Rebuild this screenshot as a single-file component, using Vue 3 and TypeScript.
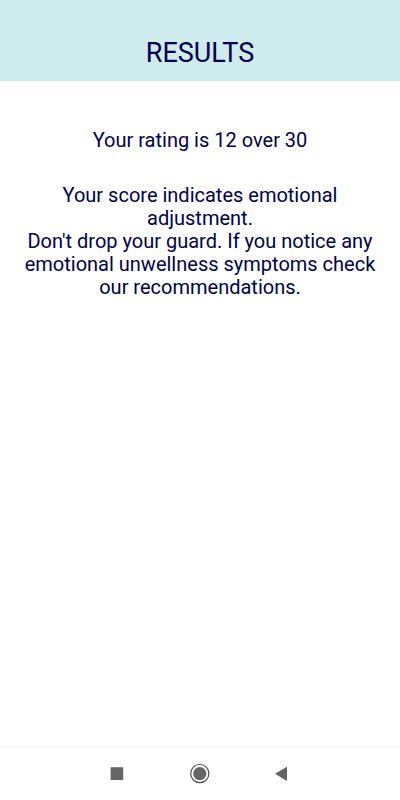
<script setup lang="ts">
const score: number = 12
const maxScore: number = 30
</script>

<template>
  <div class="screen">
    <header class="header">
      <h1 class="title">RESULTS</h1>
    </header>
    <main class="content">
      <p class="rating">Your rating is {{ score }} over {{ maxScore }}</p>
      <p class="message">
        Your score indicates emotional adjustment.<br />
        Don't drop your guard. If you notice any emotional unwellness symptoms check our recommendations.
      </p>
    </main>
    <nav class="navbar" aria-label="System">
      <button class="nav-button" type="button" aria-label="Recent apps">
        <svg width="22" height="22" viewBox="0 0 22 22"><rect x="3.6" y="4.3" width="12.6" height="12.6" rx="0.5" fill="#666" /></svg>
      </button>
      <button class="nav-button" type="button" aria-label="Home">
        <svg width="22" height="22" viewBox="0 0 22 22">
          <circle cx="10.8" cy="10.6" r="9.1" fill="none" stroke="#505050" stroke-width="1.2" />
          <circle cx="10.8" cy="10.6" r="6.6" fill="#666" />
        </svg>
      </button>
      <button class="nav-button" type="button" aria-label="Back">
        <svg width="22" height="22" viewBox="0 0 22 22"><path d="M4 10.8 16 3.7v14.2z" fill="#626262" /></svg>
      </button>
    </nav>
  </div>
</template>

<style>
body {
  background: #fff;
}
</style>

<style scoped>
.screen {
  display: flex;
  flex-direction: column;
  min-height: 100vh;
  color: #00004d;
  font-family: Roboto, sans-serif;
  text-align: center;
}

.header {
  padding: 37px 16px 12px;
  background: #ceebee;
}

.title {
  margin: 0;
  font-size: 27px;
  font-weight: 400;
  line-height: 32px;
}

.content {
  flex: 1;
  padding: 48px 20px 20px;
  font-size: 20px;
}

.rating {
  margin: 0 0 32px;
  line-height: 23px;
}

.message {
  margin: 0;
  line-height: 23px;
}

.navbar {
  display: flex;
  justify-content: center;
  gap: 60px;
  padding: 15px 0;
  border-top: 2px solid #f7f7f7;
}

.nav-button {
  display: flex;
  padding: 0;
  border: 0;
  background: none;
}
</style>
